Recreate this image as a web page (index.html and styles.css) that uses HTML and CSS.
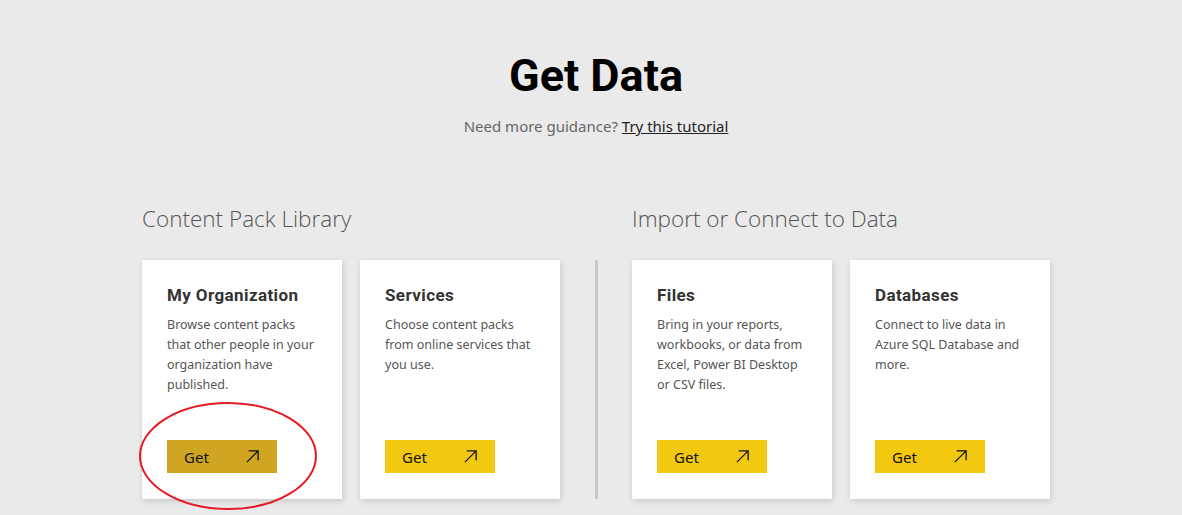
FILE: index.html
```html
<!DOCTYPE html>
<html lang="en">
<head>
  <meta charset="UTF-8" />
  <title>Get Data</title>
  <link rel="stylesheet" href="styles.css">
</head>
<body>
  <div class="intro">
    <h1>Get Data</h1>
    <p>Need more guidance? <a href="#">Try this tutorial</a></p>
  </div>

  <div class="sections">
    <div class="section">
      <h2>Content Pack Library</h2>
      <div class="cards">
        <div class="card">
          <h3>My Organization</h3>
          <p>Browse content packs that other people in your organization have published.</p>
          <div class="get-wrap">
            <button class="get active">Get <svg viewBox="0 0 16 16"><path d="M2 14L14 2M4 2H14V12" /></svg></button>
            <svg class="circle" viewBox="0 0 180 110"><ellipse cx="90" cy="55" rx="88" ry="53" /></svg>
          </div>
        </div>
        <div class="card">
          <h3>Services</h3>
          <p>Choose content packs from online services that you use.</p>
          <div class="get-wrap">
            <button class="get">Get <svg viewBox="0 0 16 16"><path d="M2 14L14 2M4 2H14V12" /></svg></button>
          </div>
        </div>
      </div>
    </div>

    <div class="divider"></div>

    <div class="section">
      <h2>Import or Connect to Data</h2>
      <div class="cards">
        <div class="card">
          <h3>Files</h3>
          <p>Bring in your reports, workbooks, or data from Excel, Power BI Desktop or CSV files.</p>
          <div class="get-wrap">
            <button class="get">Get <svg viewBox="0 0 16 16"><path d="M2 14L14 2M4 2H14V12" /></svg></button>
          </div>
        </div>
        <div class="card">
          <h3>Databases</h3>
          <p>Connect to live data in Azure SQL Database and more.</p>
          <div class="get-wrap">
            <button class="get">Get <svg viewBox="0 0 16 16"><path d="M2 14L14 2M4 2H14V12" /></svg></button>
          </div>
        </div>
      </div>
    </div>
  </div>
</body>
</html>
```

FILE: styles.css
```css
* { box-sizing: border-box; }

body {
  margin: 0;
  background: #eaeaea;
  font-family: 'Segoe UI', 'Noto Sans', sans-serif;
  color: #333;
  height: 515px;
  overflow: hidden;
}

.intro {
  text-align: center;
  padding: 50px 0 0 10px;
}

.intro h1 {
  margin: 0;
  font-family: Roboto, sans-serif;
  font-weight: bold;
  font-size: 45px;
  line-height: 52px;
  color: #000;
}

.intro p {
  margin: 14px 0 0;
  font-size: 15px;
  color: #666;
}

.intro a {
  color: #222;
  text-decoration: underline;
}

.sections {
  display: flex;
  justify-content: center;
  margin-top: 68px;
  padding-left: 10px;
}

.section h2 {
  margin: 0 0 26px;
  font-family: 'Open Sans', sans-serif;
  font-weight: 300;
  font-size: 22.5px;
  line-height: 30px;
  color: #555;
}

.divider {
  width: 3px;
  background: #c8c8c8;
  margin: 56px 34px 0 35px;
  height: 239px;
}

.cards {
  display: flex;
  gap: 18px;
}

.card {
  width: 200px;
  height: 239px;
  background: #fff;
  box-shadow: 1px 2px 6px rgba(0, 0, 0, 0.15);
  padding: 24px 23px 26px 25px;
  display: flex;
  flex-direction: column;
}

.card h3 {
  margin: 0;
  font-family: Roboto, sans-serif;
  font-weight: bold;
  font-size: 17px;
  line-height: 22px;
  color: #333;
  letter-spacing: 0.4px;
}

.card p {
  margin: 9px 0 0;
  font-size: 12.5px;
  line-height: 20px;
  color: #555;
}

.get-wrap {
  margin-top: auto;
  position: relative;
  width: 110px;
}

.get {
  display: flex;
  align-items: center;
  justify-content: space-between;
  width: 110px;
  height: 33px;
  padding: 0 17px;
  border: none;
  background: #f2c811;
  font-family: 'Segoe UI', 'Noto Sans', sans-serif;
  font-size: 15px;
  color: #111;
  cursor: pointer;
}

.get.active {
  background: #cfa521;
}

.get svg {
  width: 15px;
  height: 15px;
  fill: none;
  stroke: #111;
  stroke-width: 1.4;
}

.circle {
  position: absolute;
  left: -29px;
  top: -39px;
  width: 180px;
  height: 110px;
  pointer-events: none;
}

.circle ellipse {
  fill: none;
  stroke: #e41b23;
  stroke-width: 2;
}
```
